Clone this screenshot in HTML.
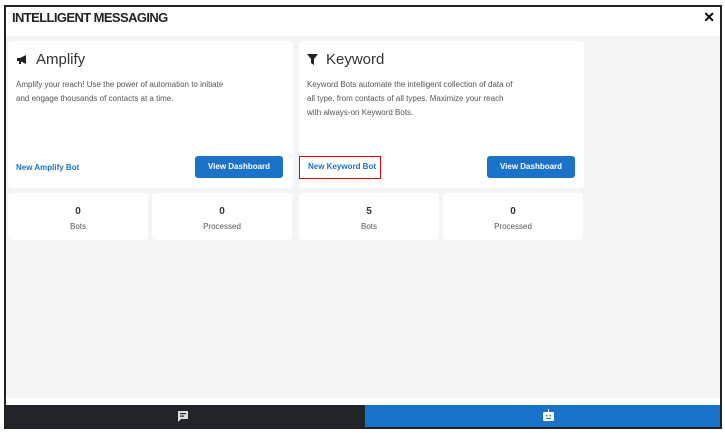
<!DOCTYPE html>
<html><head><style>
*{box-sizing:border-box;margin:0;padding:0}
body{width:725px;height:433px;background:#fff;font-family:"Liberation Sans",sans-serif;position:relative;overflow:hidden}
.frame{position:absolute;left:4px;top:5px;width:718px;height:424px;border:2px solid #222;background:#fff}
.title{position:absolute;left:6px;top:3px;font-size:13px;font-weight:bold;color:#222;letter-spacing:-0.6px}
.x{position:absolute;right:5px;top:2px;font-size:14px;font-weight:bold}
.content{position:absolute;left:0;top:29px;width:714px;height:362px;background:#f3f4f6}
.card{position:absolute;background:#fff;border-radius:4px}
.h{position:absolute;left:8px;top:10px;font-size:15px;color:#333;display:flex;align-items:center;gap:8px}
.p{position:absolute;left:8px;top:37px;font-size:8px;line-height:14px;color:#555}
.link{position:absolute;font-size:8px;color:#1a73c8;font-weight:bold}
.btn{position:absolute;background:#1a73c8;color:#fff;font-size:8px;font-weight:bold;border-radius:3px;width:88px;height:22px;line-height:22px;text-align:center}
.stat{position:absolute;top:157px;width:140px;height:47px;background:#fff;border-radius:4px;text-align:center}
.stat b{display:block;margin-top:13px;font-size:10px;color:#333}
.stat span{display:block;margin-top:5px;font-size:8px;color:#555}
.bar{position:absolute;top:398px;height:22px}
</style></head><body>
<div class="frame">
<div class="title">INTELLIGENT MESSAGING</div>
<div class="x">✕</div>
<div class="content">
<div class="card" style="left:2px;top:5px;width:285px;height:147px">
<div class="h"><svg width="12" height="11" viewBox="0 0 12 11"><path d="M1 4h3l6-3v9l-6-3H1z" fill="#222"/><rect x="3" y="7" width="2" height="3" fill="#222"/></svg>Amplify</div>
<div class="p">Amplify your reach! Use the power of automation to initiate<br>and engage thousands of contacts at a time.</div>
<div class="link" style="left:8px;top:122px">New Amplify Bot</div>
<div class="btn" style="left:187px;top:115px">View Dashboard</div>
</div>
<div class="card" style="left:293px;top:5px;width:285px;height:147px">
<div class="h"><svg width="11" height="11" viewBox="0 0 11 11"><path d="M0 0h11L7 5v6L4 9V5z" fill="#222"/></svg>Keyword</div>
<div class="p">Keyword Bots automate the intelligent collection of data of<br>all type, from contacts of all types. Maximize your reach<br>with always-on Keyword Bots.</div>
<div class="link" style="left:0;top:115px;width:82px;height:23px;border:1.5px solid #e00;padding:5px 0 0 8px">New Keyword Bot</div>
<div class="btn" style="left:188px;top:115px">View Dashboard</div>
</div>
<div class="stat" style="left:2px"><b>0</b><span>Bots</span></div>
<div class="stat" style="left:146px"><b>0</b><span>Processed</span></div>
<div class="stat" style="left:293px"><b>5</b><span>Bots</span></div>
<div class="stat" style="left:437px"><b>0</b><span>Processed</span></div>
</div>
<div class="bar" style="left:0;width:359px;background:#212529"><svg style="position:absolute;left:172px;top:6px" width="10" height="11" viewBox="0 0 10 11"><path d="M0 0h10v8H3l-3 3z" fill="#ddd"/><rect x="2" y="2" width="6" height="1.2" fill="#212529"/><rect x="2" y="4.5" width="4" height="1.2" fill="#212529"/></svg></div>
<div class="bar" style="left:359px;width:355px;background:#1a73c8"><svg style="position:absolute;left:178px;top:4px" width="11" height="13" viewBox="0 0 11 13"><rect x="5" y="0" width="1" height="3" fill="#fff"/><rect x="0" y="3" width="11" height="9" rx="1.5" fill="#fff"/><rect x="3" y="6" width="1.5" height="1.5" fill="#1a73c8"/><rect x="6.5" y="6" width="1.5" height="1.5" fill="#1a73c8"/><rect x="3" y="9" width="5" height="1" fill="#1a73c8"/></svg></div>
</div>
</body></html>
